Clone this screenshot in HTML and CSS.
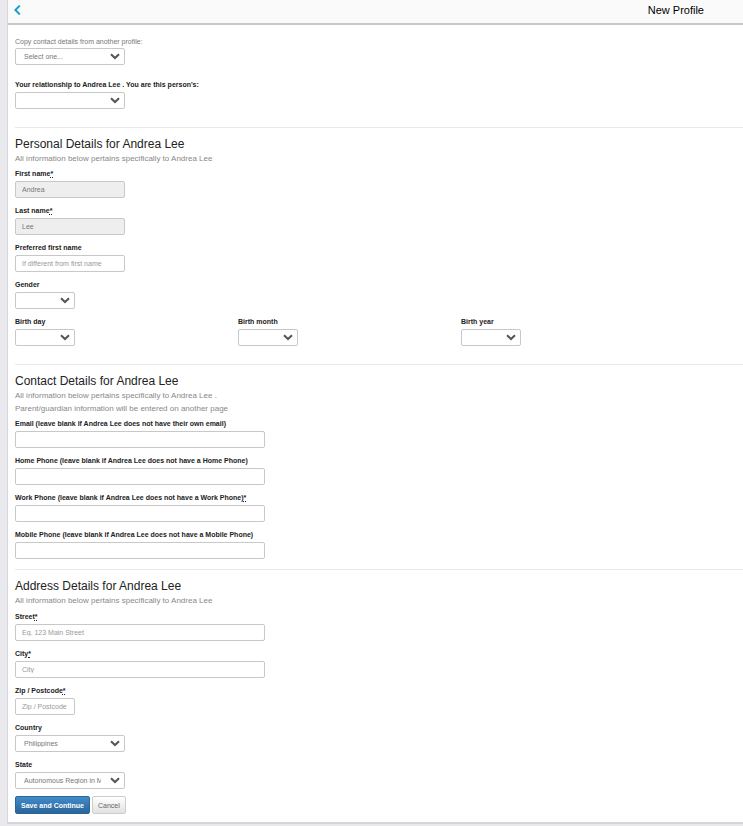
FILE: index.html
```html
<!DOCTYPE html>
<html lang="en">
<head>
    <meta charset="UTF-8">
    <meta name="viewport" content="width=device-width, initial-scale=1.0">
    <title>New Profile</title>
    <link rel="stylesheet" href="styles.css">
</head>
<body>
    <div class="page">
        <header class="topbar">
            <a href="#" class="back" aria-label="Back">
                <svg width="7" height="10" viewBox="0 0 7 10"><path d="M5.8 0.6 L1.4 5 L5.8 9.4" fill="none" stroke="#1b9fd0" stroke-width="2"/></svg>
            </a>
            <h1>New Profile</h1>
        </header>

        <form class="profile-form">
            <section class="section intro">
                <div class="field">
                    <label class="plain" for="copyFrom">Copy contact details from another profile:</label>
                    <select id="copyFrom" class="medium"><option>Select one...</option></select>
                </div>
                <div class="field">
                    <label for="relationship">Your relationship to Andrea Lee . You are this person's:</label>
                    <select id="relationship" class="medium"><option></option></select>
                </div>
            </section>

            <section class="section personal">
                <h2>Personal Details for Andrea Lee</h2>
                <p>All information below pertains specifically to Andrea Lee</p>
                <div class="fields">
                    <div class="field">
                        <label for="firstName">First name<abbr title="required">*</abbr></label>
                        <input type="text" id="firstName" class="medium" value="Andrea" disabled>
                    </div>
                    <div class="field">
                        <label for="lastName">Last name<abbr title="required">*</abbr></label>
                        <input type="text" id="lastName" class="medium" value="Lee" disabled>
                    </div>
                    <div class="field">
                        <label for="preferredName">Preferred first name</label>
                        <input type="text" id="preferredName" class="medium" placeholder="If different from first name">
                    </div>
                    <div class="field">
                        <label for="gender">Gender</label>
                        <select id="gender" class="small"><option></option></select>
                    </div>
                    <div class="birth-row">
                        <div class="field">
                            <label for="birthDay">Birth day</label>
                            <select id="birthDay" class="small"><option></option></select>
                        </div>
                        <div class="field">
                            <label for="birthMonth">Birth month</label>
                            <select id="birthMonth" class="small"><option></option></select>
                        </div>
                        <div class="field">
                            <label for="birthYear">Birth year</label>
                            <select id="birthYear" class="small"><option></option></select>
                        </div>
                    </div>
                </div>
            </section>

            <section class="section contact">
                <h2>Contact Details for Andrea Lee</h2>
                <p>All information below pertains specifically to Andrea Lee .<br>Parent/guardian information will be entered on another page</p>
                <div class="fields">
                    <div class="field">
                        <label for="email">Email (leave blank if Andrea Lee does not have their own email)</label>
                        <input type="email" id="email" class="large">
                    </div>
                    <div class="field">
                        <label for="homePhone">Home Phone (leave blank if Andrea Lee does not have a Home Phone)</label>
                        <input type="tel" id="homePhone" class="large">
                    </div>
                    <div class="field">
                        <label for="workPhone">Work Phone (leave blank if Andrea Lee does not have a Work Phone)<abbr title="required">*</abbr></label>
                        <input type="tel" id="workPhone" class="large">
                    </div>
                    <div class="field">
                        <label for="mobilePhone">Mobile Phone (leave blank if Andrea Lee does not have a Mobile Phone)</label>
                        <input type="tel" id="mobilePhone" class="large">
                    </div>
                </div>
            </section>

            <section class="section address">
                <h2>Address Details for Andrea Lee</h2>
                <p>All information below pertains specifically to Andrea Lee</p>
                <div class="fields">
                    <div class="field">
                        <label for="street">Street<abbr title="required">*</abbr></label>
                        <input type="text" id="street" class="large" placeholder="Eg. 123 Main Street">
                    </div>
                    <div class="field">
                        <label for="city">City<abbr title="required">*</abbr></label>
                        <input type="text" id="city" class="large" placeholder="City">
                    </div>
                    <div class="field">
                        <label for="zip">Zip / Postcode<abbr title="required">*</abbr></label>
                        <input type="text" id="zip" class="small" placeholder="Zip / Postcode">
                    </div>
                    <div class="field">
                        <label for="country">Country</label>
                        <select id="country" class="medium"><option>Philippines</option></select>
                    </div>
                    <div class="field">
                        <label for="state">State</label>
                        <select id="state" class="medium"><option>Autonomous Region in Muslim Mindanao</option></select>
                    </div>
                    <div class="actions">
                        <button type="submit" class="btn btn-primary">Save and Continue</button>
                        <button type="button" class="btn">Cancel</button>
                    </div>
                </div>
            </section>
        </form>
    </div>
</body>
</html>
```
FILE: styles.css
```css
* {
    box-sizing: border-box;
}
body {
    margin: 0;
    padding: 0 0 2px 7px;
    background-color: #e8e8ed;
    font-family: "Liberation Sans", Arial, sans-serif;
    font-size: 7px;
    line-height: 13px;
    color: #222;
}
.page {
    background: white;
    border-left: 1px solid #d8d8dc;
    border-bottom: 2px solid #d6d6da;
}
.topbar {
    display: flex;
    align-items: center;
    justify-content: space-between;
    height: 25px;
    padding: 0 39px 3px 6px;
    background: #fafafa;
    border-bottom: 2px solid #c8c8c8;
}
.back {
    display: flex;
}
h1 {
    margin: 0;
    font-size: 11px;
    font-weight: normal;
    line-height: 14px;
    color: #000;
}
.profile-form {
    padding: 10px 0 8px 7px;
}
.section + .section {
    border-top: 1px solid #eaeaea;
    padding-top: 8px;
}
.intro {
    display: flex;
    flex-direction: column;
    gap: 14px;
    padding-bottom: 18px;
}
.personal {
    padding-bottom: 18px;
}
.contact {
    padding-bottom: 10px;
}
h2 {
    margin: 0;
    font-size: 12px;
    font-weight: normal;
    line-height: 16px;
}
p {
    margin: 0 0 3px;
    font-size: 8px;
    color: #888;
}
.address p {
    margin-bottom: 4px;
}
.fields {
    display: flex;
    flex-direction: column;
    gap: 7px;
}
.birth-row {
    display: grid;
    grid-template-columns: repeat(3, minmax(60px, 223px));
}
label {
    display: block;
    padding-bottom: 2px;
    font-weight: bold;
    line-height: 11px;
}
label.plain {
    padding-bottom: 0;
    font-weight: normal;
    line-height: 13px;
    color: #777;
}
abbr {
    text-decoration: underline dotted;
}
input, select {
    display: block;
    height: 17px;
    padding: 0 6px;
    border: 1px solid #c8c8c8;
    border-radius: 2px;
    background-color: white;
    font-family: inherit;
    font-size: 7px;
    color: #777;
}
input:disabled {
    background-color: #eee;
}
input::placeholder {
    color: #999;
}
select {
    appearance: none;
    padding: 0 23px 0 8px;
    background-image: url("data:image/svg+xml,%3Csvg xmlns='http://www.w3.org/2000/svg' width='10' height='7' viewBox='0 0 10 7'%3E%3Cpath d='M1 1.2 L5 5 L9 1.2' fill='none' stroke='%23555' stroke-width='2'/%3E%3C/svg%3E");
    background-repeat: no-repeat;
    background-position: right 4px center;
}
.small {
    width: 60px;
}
.medium {
    width: 110px;
}
.large {
    width: 250px;
    max-width: 100%;
}
.actions {
    display: flex;
    gap: 2px;
}
.btn {
    height: 18px;
    padding: 0 5px;
    border: 1px solid #ccc;
    border-radius: 2px;
    background: linear-gradient(#fff, #e2e2e2);
    font-family: inherit;
    font-size: 7px;
    color: #666;
    cursor: pointer;
}
.btn-primary {
    background: linear-gradient(#428bca, #2a6499);
    border-color: #2b669a;
    font-weight: bold;
    color: white;
}
```
